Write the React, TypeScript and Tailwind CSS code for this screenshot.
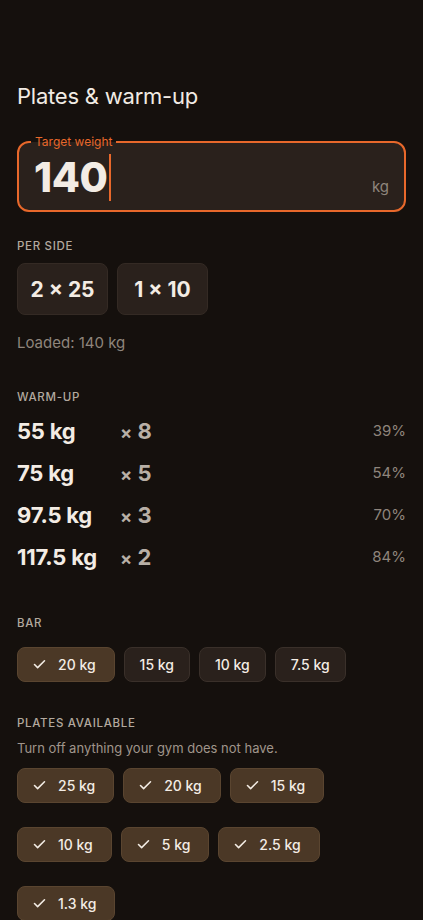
import { Check } from 'lucide-react';

const warmups = [
  { kg: '55', reps: 8, pct: 39 },
  { kg: '75', reps: 5, pct: 54 },
  { kg: '97.5', reps: 3, pct: 70 },
  { kg: '117.5', reps: 2, pct: 84 },
];

const bars = [
  { label: '20 kg', on: true },
  { label: '15 kg', on: false },
  { label: '10 kg', on: false },
  { label: '7.5 kg', on: false },
];

const plateRows = [
  ['25 kg', '20 kg', '15 kg'],
  ['10 kg', '5 kg', '2.5 kg'],
  ['1.3 kg'],
];

function Toggle({ label, on }: { label: string; on: boolean }) {
  return (
    <button
      className={
        on
          ? 'flex h-[35px] items-center gap-[11px] rounded-[8px] border border-[#5a4530] bg-[#4b3826] pl-[14px] pr-[18px] text-[14px] font-medium text-[#f3ece4]'
          : 'flex h-[35px] items-center rounded-[8px] border border-[#3a302a] bg-[#2a211c] px-[15px] text-[14px] font-medium text-[#f3ece4]'
      }
    >
      {on && <Check className="h-[15px] w-[15px]" strokeWidth={2.5} />}
      {label}
    </button>
  );
}

function Label({ children }: { children: React.ReactNode }) {
  return <div className="text-[11.5px] font-medium uppercase tracking-[0.06em] text-[#b3a99f]">{children}</div>;
}

export default function App() {
  return (
    <div
      className="min-h-[920px] w-full bg-[#15100d] px-[17px] pt-[80px] pb-10 text-[#f3ece4]"
      style={{ fontFamily: 'Inter, "Noto Sans", sans-serif' }}
    >
      <h1 className="text-[22px] font-normal leading-[32px] tracking-[-0.01em] text-[#f1ebe4]">Plates &amp; warm-up</h1>

      {/* Target weight */}
      <div className="relative mt-[29px] flex h-[71px] items-center justify-between rounded-[12px] border-2 border-[#e8682b] bg-[#2a211c] pl-[15px] pr-[15px]">
        <span className="absolute -top-[9px] left-[12px] bg-[linear-gradient(to_bottom,#15100d_50%,#2a211c_50%)] px-[4px] text-[12px] leading-[16px] text-[#e8682b]">
          Target weight
        </span>
        <div className="flex items-center pt-[2px]">
          <span className="text-[41px] font-extrabold leading-none tracking-[-0.01em] text-[#f3ece4]">140</span>
          <span className="ml-[2px] h-[47px] w-[2px] bg-[#e8682b]" />
        </div>
        <span className="self-end pb-[12px] text-[15px] text-[#8f857c]">kg</span>
      </div>

      {/* Per side */}
      <div className="mt-[26px]">
        <Label>Per side</Label>
        <div className="mt-[8px] flex gap-[9px]">
          {['2 × 25', '1 × 10'].map((t) => (
            <div
              key={t}
              className="flex h-[52px] w-[91px] items-center justify-center rounded-[8px] border border-[#342a24] bg-[#2a211c] text-[21px] font-bold text-[#f3ece4]"
            >
              {t}
            </div>
          ))}
        </div>
        <div className="mt-[17px] text-[15px] text-[#8f857c]">Loaded: 140 kg</div>
      </div>

      {/* Warm-up */}
      <div className="mt-[34px]">
        <Label>Warm-up</Label>
        <div className="mt-[4px] flex flex-col">
          {warmups.map((w) => (
            <div key={w.kg} className="flex h-[42px] items-center">
              <span className="w-[103px] text-[22px] font-bold tracking-[-0.01em] text-[#f3ece4]">
                {w.kg} kg
              </span>
              <span className="text-[22px] font-bold text-[#b8afa6]">
                <span className="text-[18px]">×</span> {w.reps}
              </span>
              <span className="ml-auto text-[15px] text-[#8f857c]">{w.pct}%</span>
            </div>
          ))}
        </div>
      </div>

      {/* Bar */}
      <div className="mt-[37px]">
        <Label>Bar</Label>
        <div className="mt-[15px] flex gap-[9px]">
          {bars.map((b) => (
            <Toggle key={b.label} label={b.label} on={b.on} />
          ))}
        </div>
      </div>

      {/* Plates */}
      <div className="mt-[33px]">
        <Label>Plates available</Label>
        <div className="mt-[6px] text-[13px] text-[#a0958b]">Turn off anything your gym does not have.</div>
        <div className="mt-[10px] flex flex-col gap-[24px]">
          {plateRows.map((row, i) => (
            <div key={i} className="flex gap-[9px]">
              {row.map((p) => (
                <Toggle key={p} label={p} on />
              ))}
            </div>
          ))}
        </div>
      </div>
    </div>
  );
}
